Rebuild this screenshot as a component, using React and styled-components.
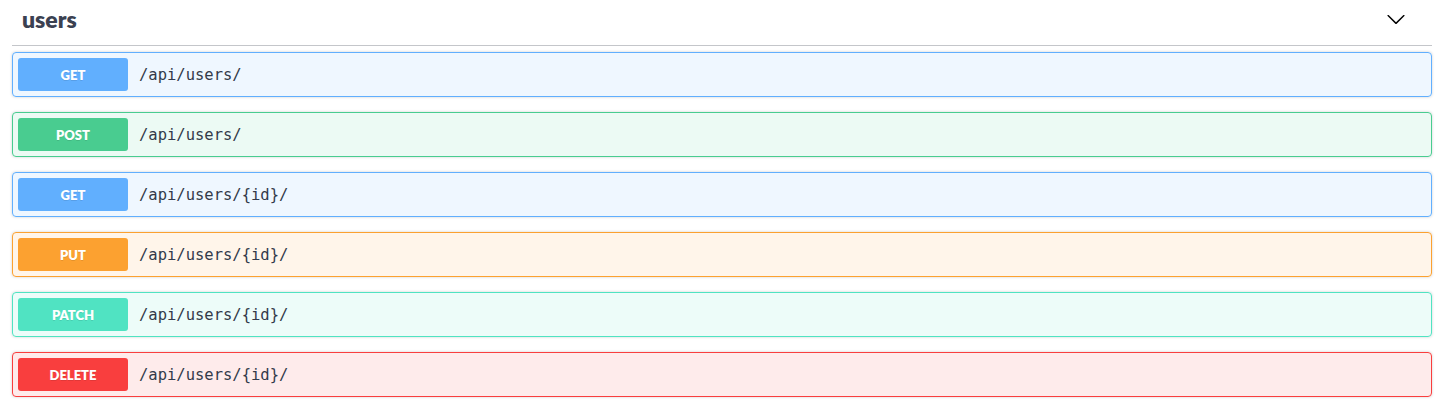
import React from 'react';
import styled, { createGlobalStyle } from 'styled-components';

const GlobalStyle = createGlobalStyle`
  body {
    margin: 0;
    background: #fff;
    font-family: "Lato", "Noto Sans", sans-serif;
  }
`;

const methods = {
  get: { color: '#61affe', bg: 'rgba(97,175,254,.1)' },
  post: { color: '#49cc90', bg: 'rgba(73,204,144,.1)' },
  put: { color: '#fca130', bg: 'rgba(252,161,48,.1)' },
  patch: { color: '#50e3c2', bg: 'rgba(80,227,194,.1)' },
  delete: { color: '#f93e3e', bg: 'rgba(249,62,62,.1)' },
};

const Section = styled.div`
  padding: 0 19px 0 12px;
`;

const TagHeader = styled.h3`
  display: flex;
  align-items: center;
  justify-content: space-between;
  box-sizing: border-box;
  height: 46px;
  margin: 0 0 6px;
  padding: 0 26px 8px 10px;
  border-bottom: 1px solid rgba(59, 65, 81, 0.3);
  font-family: "Lato", "Noto Sans", sans-serif;
  font-size: 23px;
  font-weight: 800;
  color: #3b4151;
`;

const Arrow = styled.svg`
  width: 20px;
  height: 20px;
  fill: #000;
`;

const Block = styled.div`
  display: flex;
  align-items: center;
  box-sizing: border-box;
  height: 45px;
  margin-bottom: 15px;
  padding: 5px;
  border: 1px solid ${p => methods[p.method].color};
  border-radius: 4px;
  background: ${p => methods[p.method].bg};
  box-shadow: 0 0 3px rgba(0, 0, 0, 0.19);
`;

const Badge = styled.span`
  display: flex;
  align-items: center;
  justify-content: center;
  width: 110px;
  height: 33px;
  flex-shrink: 0;
  border-radius: 3px;
  background: ${p => methods[p.method].color};
  color: #fff;
  font-family: "Lato", "Noto Sans", sans-serif;
  font-size: 13px;
  font-weight: 800;
  text-shadow: 0 1px 0 rgba(0, 0, 0, 0.1);
`;

const Path = styled.span`
  padding: 0 10px 0 11px;
  font-family: "DejaVu Sans Mono", monospace;
  font-size: 15.5px;
  color: #333a4a;
`;

const rows = [
  { method: 'get', path: '/api/users/' },
  { method: 'post', path: '/api/users/' },
  { method: 'get', path: '/api/users/{id}/' },
  { method: 'put', path: '/api/users/{id}/' },
  { method: 'patch', path: '/api/users/{id}/' },
  { method: 'delete', path: '/api/users/{id}/' },
];

export default function App() {
  return (
    <>
      <GlobalStyle />
      <Section>
        <TagHeader>
          <span>users</span>
          <Arrow viewBox="0 0 20 20">
            <path d="M17.418 6.109c.272-.268.709-.268.979 0s.271.701 0 .969l-7.908 7.83c-.27.268-.707.268-.979 0l-7.908-7.83c-.27-.268-.27-.701 0-.969.271-.268.709-.268.979 0L10 13.25l7.418-7.141z" />
          </Arrow>
        </TagHeader>
        {rows.map((r, i) => (
          <Block key={i} method={r.method}>
            <Badge method={r.method}>{r.method.toUpperCase()}</Badge>
            <Path>{r.path}</Path>
          </Block>
        ))}
      </Section>
    </>
  );
}
